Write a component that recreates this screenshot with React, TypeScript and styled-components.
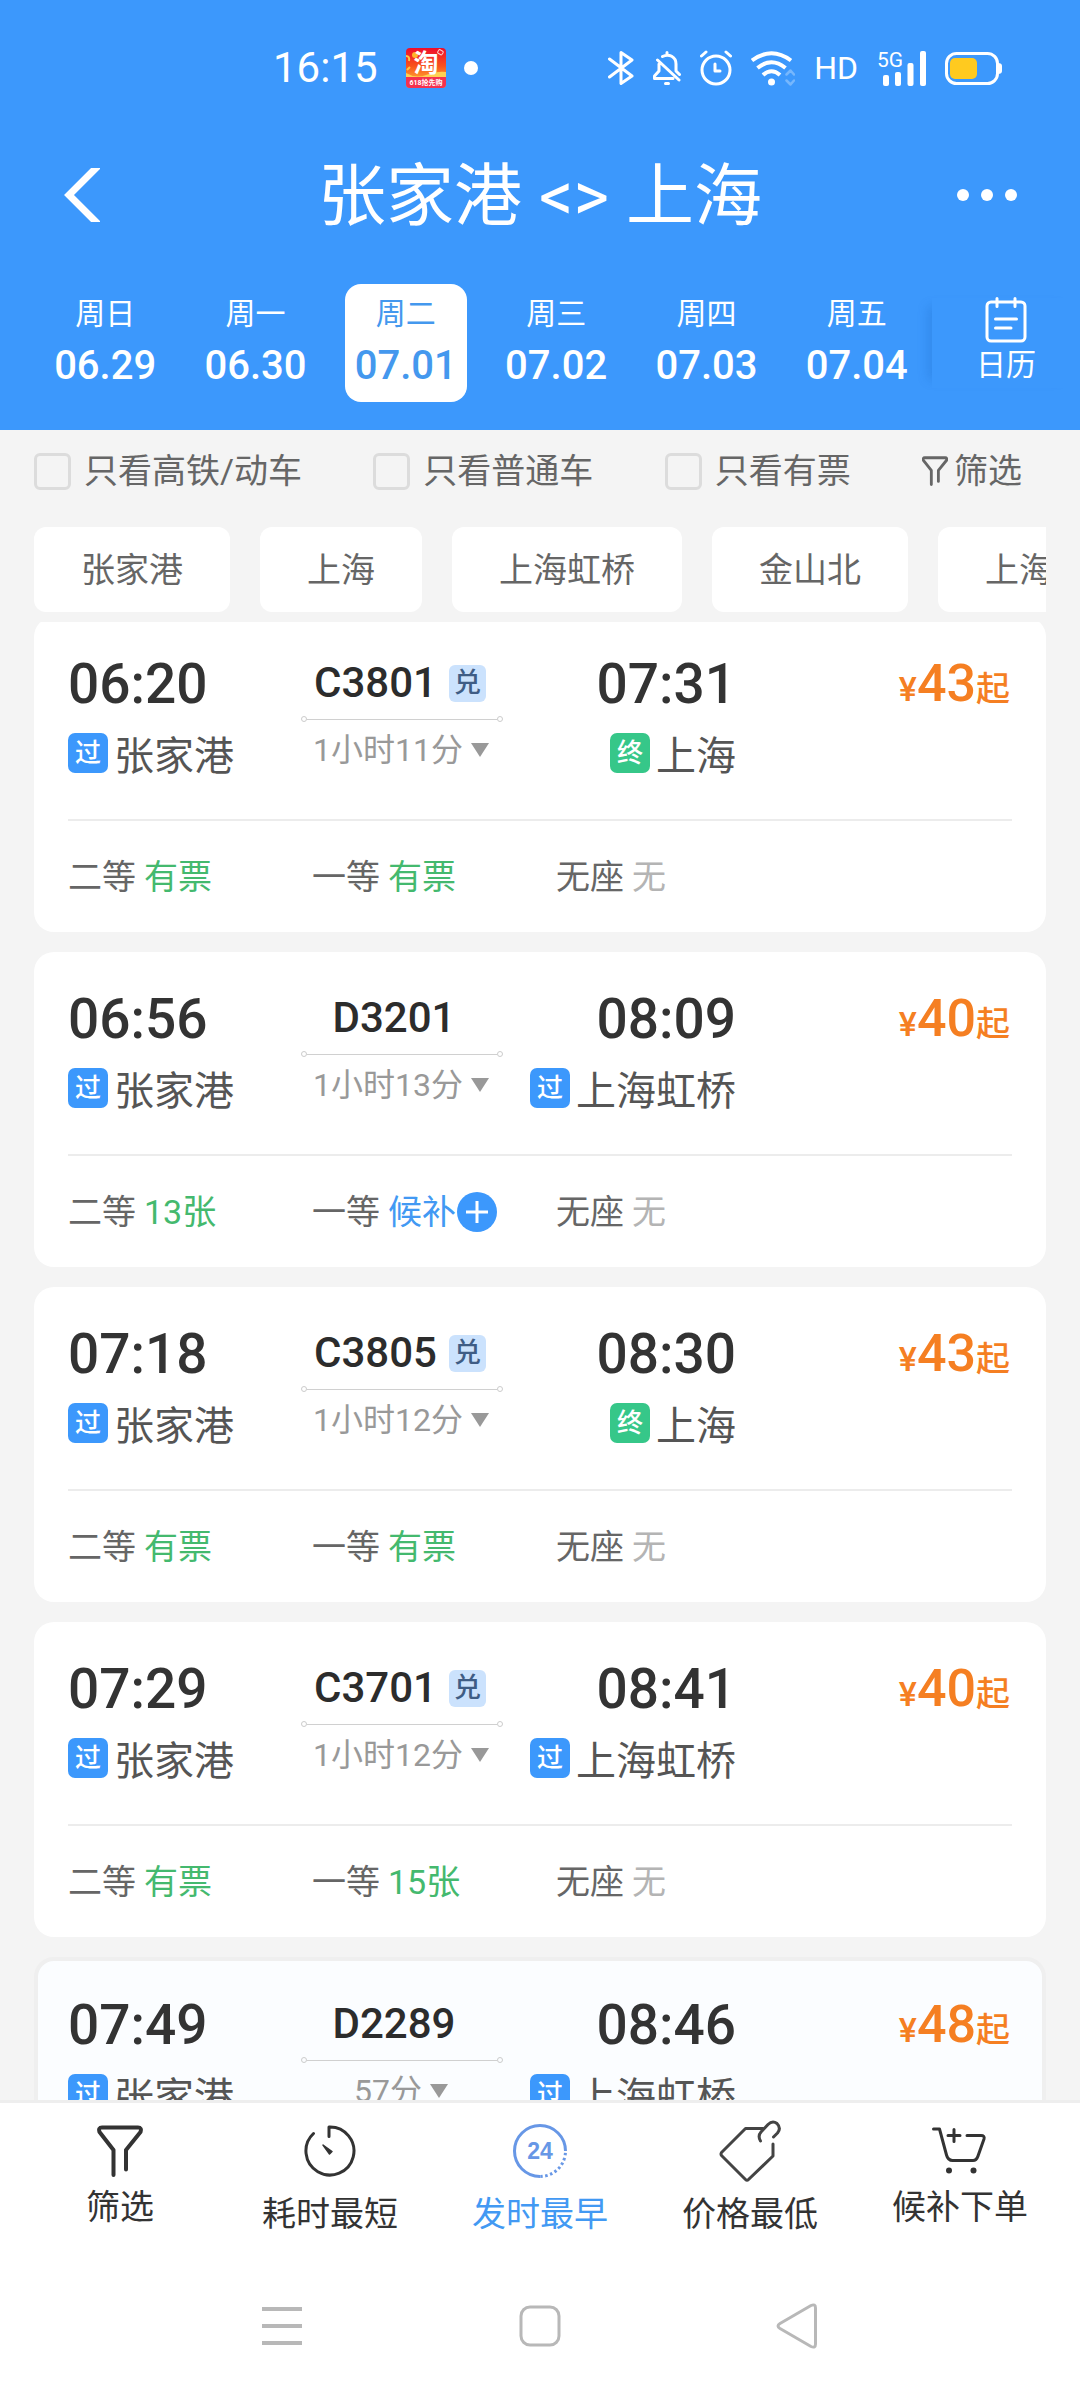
import React from 'react';
import styled, { createGlobalStyle, css } from 'styled-components';

const blue = '#3c98fc';

const GlobalStyle = createGlobalStyle`
  *, *::before, *::after { box-sizing: border-box; }
  body { margin: 0; background: #f4f4f4; }
  body, button, input {
    font-family: Roboto, "Noto Sans CJK SC", sans-serif;
  }
  button {
    padding: 0;
    border: 0;
    background: none;
    color: inherit;
    cursor: pointer;
  }
  h1, h2, p, ul { margin: 0; padding: 0; font-weight: 400; }
  ul { list-style: none; }
  svg { display: block; flex: none; }
`;

const Page = styled.div`
  display: flex;
  flex-direction: column;
  height: 100vh;
  overflow: hidden;
  background: #f4f4f4;
`;

/* ---------- header ---------- */

const Header = styled.header`
  flex: none;
  padding-bottom: 28px;
  background: ${blue};
  color: #fff;
`;

const StatusBar = styled.div`
  display: flex;
  align-items: center;
  justify-content: space-between;
  height: 136px;
  padding: 0 78px 0 273px;
`;

const StatusLeft = styled.div`
  display: flex;
  align-items: center;
`;

const Clock = styled.time`
  margin-right: 28px;
  font-size: 42px;
  line-height: 48px;
`;

const NoticeDot = styled.span`
  width: 14px;
  height: 14px;
  margin-left: 18px;
  border-radius: 50%;
  background: #fff;
`;

const StatusRight = styled.div`
  display: flex;
  align-items: center;
  gap: 19px;
`;

const HdLabel = styled.span`
  font-size: 32px;
  line-height: 36px;
`;

const TitleRow = styled.div`
  display: grid;
  grid-template-columns: 120px 1fr 120px;
  align-items: center;
  height: 118px;
  padding: 0 22px;
`;

const IconButton = styled.button`
  display: flex;
  align-items: center;
  justify-content: center;
  height: 80px;
`;

const Title = styled.h1`
  padding-top: 4px;
  font-size: 68px;
  line-height: 80px;
  text-align: center;
  white-space: nowrap;
`;

const DateRow = styled.div`
  display: flex;
  align-items: center;
  margin-top: 30px;
`;

const DateStrip = styled.div`
  display: flex;
  flex: 1;
  padding-left: 30px;
`;

const DateCell = styled.div`
  display: flex;
  flex: 1;
  justify-content: center;
`;

const DateButton = styled.button<{ $active?: boolean }>`
  display: flex;
  flex-direction: column;
  align-items: center;
  width: 122px;
  height: 118px;
  padding-top: 10px;
  border-radius: 16px;
  ${(p) => p.$active && css`
    background: #fff;
    color: #4498ee;
  `}
`;

const Weekday = styled.span`
  font-size: 30px;
  line-height: 40px;
`;

const DateText = styled.span`
  padding-top: 8px;
  font-size: 40px;
  font-weight: 500;
  line-height: 48px;
`;

const CalendarButton = styled.button`
  display: flex;
  flex-direction: column;
  align-items: center;
  justify-content: center;
  gap: 2px;
  width: 148px;
  height: 90px;
  padding-bottom: 5px;
  background: ${blue};
  box-shadow: -12px 0 10px -8px rgba(20, 90, 180, 0.22);
`;

/* ---------- filters ---------- */

const Filters = styled.form`
  display: flex;
  flex: none;
  align-items: center;
  justify-content: space-between;
  height: 97px;
  padding: 0 58px 15px 34px;
  color: #666;
  font-size: 34px;
  line-height: 40px;
`;

const CheckLabel = styled.label`
  display: flex;
  align-items: center;
  gap: 13px;
  cursor: pointer;
`;

const CheckBox = styled.input`
  appearance: none;
  width: 37px;
  height: 37px;
  margin: 0;
  border: 3px solid #dcdcdc;
  border-radius: 6px;
  background: transparent;
  &:checked { background: ${blue}; }
`;

const FilterButton = styled.button`
  display: flex;
  align-items: center;
  gap: 6px;
  font-size: 34px;
  line-height: 40px;
`;

const StationChips = styled.div`
  display: flex;
  flex: none;
  gap: 30px;
  margin: 0 34px;
  overflow: hidden;
`;

const Chip = styled.button`
  flex: none;
  height: 85px;
  padding: 0 47px;
  border-radius: 12px;
  background: #fff;
  color: #666;
  font-size: 34px;
  line-height: 40px;
`;

/* ---------- trains ---------- */

const TrainViewport = styled.main`
  flex: 1;
  min-height: 0;
  margin-top: 10px;
  padding: 0 34px;
  overflow: hidden;
`;

const TrainList = styled.ul`
  display: flex;
  flex-direction: column;
  gap: 20px;
  margin-top: -5px;
`;

const Card = styled.li<{ $pressed?: boolean }>`
  border-radius: 20px;
  padding: 39px 34px 0;
  background: #fff;
  ${(p) => p.$pressed && css`
    border: 4px solid #efefef;
    padding: 36px 30px 0;
    background: #fbfdff;
  `}
`;

const Journey = styled.div`
  display: grid;
  grid-template-columns: 233fr 202fr 233fr 276fr;
  align-items: start;
  padding-bottom: 38px;
  border-bottom: 2px solid #ececec;
`;

const Stop = styled.div<{ $end?: boolean }>`
  display: flex;
  flex-direction: column;
  align-items: ${(p) => (p.$end ? 'flex-end' : 'flex-start')};
  gap: 21px;
  white-space: nowrap;
`;

const StopTime = styled.time`
  color: #333;
  font-size: 55px;
  font-weight: 500;
  line-height: 56px;
`;

const Station = styled.div`
  display: flex;
  align-items: flex-start;
  gap: 6px;
  color: #555;
  font-size: 40px;
  line-height: 48px;
`;

const StopBadge = styled.span<{ $terminal?: boolean }>`
  width: 40px;
  height: 40px;
  border-radius: 7px;
  background: ${(p) => (p.$terminal ? '#36c789' : blue)};
  color: #fff;
  font-size: 26px;
  font-weight: 500;
  line-height: 40px;
  text-align: center;
`;

const TrainInfo = styled.div`
  display: flex;
  flex-direction: column;
  align-items: center;
  gap: 10px;
  padding-top: 4px;
`;

const TrainNumber = styled.h2`
  display: flex;
  align-items: center;
  padding-right: 4px;
  color: #2c2c2c;
  font-size: 42px;
  font-weight: 500;
  line-height: 46px;
`;

const NumberText = styled.span`
  margin-right: 12px;
`;

const RedeemBadge = styled.span`
  width: 37px;
  height: 37px;
  border-radius: 6px;
  background: #cbe2fd;
  color: #3f5d85;
  font-size: 27px;
  line-height: 37px;
  text-align: center;
`;

const RouteLine = styled.div`
  display: flex;
  align-items: center;
  width: 100%;
  height: 6px;
  &::before, &::after {
    content: '';
    width: 6px;
    height: 6px;
    border: 1px solid #ccc;
    border-radius: 50%;
  }
`;

const RouteRule = styled.span`
  flex: 1;
  height: 1px;
  background: #d0d0d0;
`;

const Duration = styled.button`
  display: flex;
  align-items: center;
  gap: 8px;
  padding-right: 2px;
  color: #999;
  font-size: 32px;
  line-height: 36px;
  white-space: nowrap;
`;

const Price = styled.p`
  padding-right: 2px;
  color: #f57f22;
  font-size: 34px;
  font-weight: 500;
  line-height: 56px;
  text-align: right;
  white-space: nowrap;
`;

const Amount = styled.strong`
  font-size: 52px;
  font-weight: 500;
`;

const Seats = styled.div`
  display: grid;
  grid-template-columns: repeat(3, 244fr) 212fr;
  padding: 36px 0 35px;
`;

const Seat = styled.div`
  display: flex;
  align-items: center;
  gap: 8px;
  color: #666;
  font-size: 34px;
  line-height: 40px;
  white-space: nowrap;
`;

type SeatState = 'ok' | 'wait' | 'none';
const seatColors: Record<SeatState, string> = { ok: '#44b96e', wait: '#4299f3', none: '#b4b4b4' };

const SeatStatus = styled.span<{ $state: SeatState }>`
  display: flex;
  align-items: center;
  height: 40px;
  color: ${(p) => seatColors[p.$state]};
`;

/* ---------- bottom ---------- */

const SortBar = styled.nav`
  display: flex;
  flex: none;
  height: 153px;
  padding: 14px 15px 0;
  border-top: 3px solid #eee;
  background: #fff;
`;

const SortButton = styled.button<{ $active?: boolean; $low?: boolean }>`
  display: flex;
  flex: 1;
  flex-direction: column;
  align-items: center;
  gap: ${(p) => (p.$low ? 9 : 2)}px;
  color: ${(p) => (p.$active ? '#4299f3' : '#333')};
  font-size: 34px;
  line-height: 40px;
`;

const IconSlot = styled.span`
  display: flex;
  align-items: center;
  height: 68px;
`;

const SystemNav = styled.nav`
  display: flex;
  flex: none;
  align-items: center;
  height: 147px;
  padding: 0 153px 2px;
  background: #fff;
`;

const SystemButton = styled.button`
  display: flex;
  flex: 1;
  align-items: center;
  justify-content: center;
  height: 72px;
`;

/* ---------- icons ---------- */

const stroke = (width: number, color = 'currentColor') => ({
  fill: 'none',
  stroke: color,
  strokeWidth: width,
  strokeLinecap: 'round' as const,
  strokeLinejoin: 'round' as const,
});

const ShopAppIcon = () => (
  <svg width="40" height="40" viewBox="0 0 40 40" aria-hidden="true">
    <defs>
      <linearGradient id="shop" x1="0" y1="0" x2="0" y2="1">
        <stop offset="0" stopColor="#ee0d2c" />
        <stop offset="0.45" stopColor="#f8521c" />
        <stop offset="0.75" stopColor="#ff9a2e" />
      </linearGradient>
    </defs>
    <rect width="40" height="40" rx="4" fill="url(#shop)" />
    <circle cx="9" cy="7" r="3" fill="#ffb52b" />
    <path d="M0 8q4 0 3 5M1 22l3-3" stroke="#ffc545" strokeWidth="2" fill="none" />
    <rect x="32" y="2" width="5" height="4" rx="1" fill="none" stroke="#ffd0c8" transform="rotate(30 34 4)" />
    <path d="M0 25q10 6 20 2t20-3v5H0z" fill="#ffd052" />
    <path d="M0 29h40v7q0 4-4 4H4q-4 0-4-4z" fill="#f5314f" />
    <text x="20" y="24" fontSize="25" fontWeight="700" fill="#fff" textAnchor="middle">淘</text>
    <text x="20" y="37" fontSize="7" fontWeight="700" fill="#fff" textAnchor="middle">618抢先购</text>
  </svg>
);

const BluetoothIcon = () => (
  <svg width="26" height="34" viewBox="0 0 26 34" {...stroke(3)} aria-label="蓝牙">
    <path d="M1.5 8L24 25L13 32.5V1.5L24 9L1.5 26" />
  </svg>
);

const MutedIcon = () => (
  <svg width="28" height="34" viewBox="0 0 28 34" {...stroke(3)} aria-label="静音">
    <path d="M4.500 9L26 29M14 1.500V4M9.500 5.500C16 2 23 6 23 13V20L26.500 23.500M6 13V20L1.500 25V27.500H20M12.500 32.500H15.500" />
  </svg>
);

const AlarmIcon = () => (
  <svg width="32" height="36" viewBox="0 0 32 36" {...stroke(3)} aria-label="闹钟">
    <circle cx="16" cy="20" r="14" />
    <path d="M15 14V21H20M1.500 6L6 2M30.500 6L26 2" />
  </svg>
);

const WifiIcon = () => (
  <svg width="44" height="35" viewBox="0 0 44 35" aria-label="无线网络">
    <g fill="none" stroke="#fff" strokeWidth="4">
      <path d="M1 9.500Q20.500-5 40 9.500M6.500 17Q20.500 5.500 34.500 17M12 24Q20.500 16.500 29 24" />
    </g>
    <circle cx="20.500" cy="31" r="3.500" fill="#fff" />
    <g opacity="0.3" {...stroke(2.500, '#fff')}>
      <path d="M35.500 23.500L39.500 19.500L43 23.500M35.500 29.500L39.500 33.500L43 29.500" />
    </g>
  </svg>
);

const SignalIcon = () => (
  <svg width="49" height="35" viewBox="0 0 49 35" fill="#fff" overflow="visible" aria-label="信号">
    <text x="0" y="16" fontSize="21">5G</text>
    <rect x="6" y="24" width="6" height="11" rx="2" />
    <rect x="18" y="21" width="6" height="14" rx="2" />
    <rect x="30.500" y="12" width="6" height="23" rx="2" />
    <rect x="43" y="0" width="6" height="35" rx="2" />
  </svg>
);

const BatteryIcon = () => (
  <svg width="57" height="33" viewBox="0 0 57 33" aria-label="电量">
    <rect x="1.500" y="1.500" width="51" height="30" rx="10" fill="none" stroke="#fff" strokeWidth="3" />
    <rect x="5" y="6" width="27" height="21" rx="5" fill="#ffca1f" />
    <path d="M53 11q4 0 4 3v5q0 3-4 3z" fill="#fff" />
  </svg>
);

const BackIcon = () => (
  <svg width="36" height="54" viewBox="0 0 36 54" fill="none" stroke="#fff" strokeWidth="7" aria-hidden="true">
    <path d="M36-4L5 27L36 58" />
  </svg>
);

const MoreIcon = () => (
  <svg width="82" height="12" viewBox="0 0 82 12" fill="#fff" aria-hidden="true">
    <circle cx="6" cy="6" r="6" />
    <circle cx="30" cy="6" r="6" />
    <circle cx="54" cy="6" r="6" />
  </svg>
);

const CalendarIcon = () => (
  <svg width="42" height="46" viewBox="0 0 42 46" {...stroke(3)} aria-hidden="true">
    <rect x="2" y="5" width="38" height="39" rx="4" />
    <path d="M12 1.500V9.500M30 1.500V9.500M10.500 22H31.500M10.500 31H26" />
  </svg>
);

const FunnelIcon = ({ width, height, line }: { width: number; height: number; line: number }) => (
  <svg width={width} height={height} viewBox="0 0 46 52" {...stroke(line)} aria-hidden="true">
    <path d="M16.500 50V25L2.500 7Q1 2.500 5 2.500H41Q45 2.500 43.500 7L29 25V44.500" />
  </svg>
);

const PlusIcon = () => (
  <svg width="42" height="42" viewBox="0 0 42 42" aria-hidden="true">
    <circle cx="21" cy="21" r="20" fill={blue} />
    <path d="M21 10V32M10 21H32" stroke="#fff" strokeWidth="3" />
  </svg>
);

const TriangleIcon = () => (
  <svg width="18" height="16" viewBox="0 0 18 16" aria-hidden="true">
    <path d="M0 1H18L9 15Z" fill="#999" />
  </svg>
);

const TimerIcon = () => (
  <svg width="52" height="52" viewBox="0 0 52 52" {...stroke(3)} aria-hidden="true">
    <path d="M25 11.500V2A24 24 0 1 1 9.500 8.500" />
    <path d="M19 20L28 26.500L25.500 29Z" fill="currentColor" strokeWidth="1.500" />
  </svg>
);

const Clock24Icon = () => (
  <svg width="56" height="56" viewBox="0 0 56 56" fill="none" stroke="#6797e6" strokeWidth="3" aria-hidden="true">
    <path d="M28 53.500A25.500 25.500 0 1 1 53.500 28" />
    <path d="M53.500 28A25.500 25.500 0 0 1 28 53.500" strokeDasharray="2.500 2.500" strokeDashoffset="-2" />
    <text x="28" y="36" fontFamily="Liberation Sans, sans-serif" fontSize="23" fontWeight="700" fill="#6797e6" stroke="none" textAnchor="middle">24</text>
  </svg>
);

const TagIcon = () => (
  <svg width="62" height="62" viewBox="0 0 62 62" {...stroke(3, '#444')} aria-hidden="true">
    <path d="M44 8.500H26.500L2.500 32.500Q1.500 34 2.500 35.500L26.500 59.500Q28 61 29.500 59.500L54 36V24" />
    <path d="M41.500 21Q38.500 16 42 12L49 4.500Q53.500 0 58 3.500Q62.500 8 58.500 13L54.500 17" />
  </svg>
);

const CartIcon = () => (
  <svg width="58" height="52" viewBox="0 0 58 52" {...stroke(3, '#333')} aria-hidden="true">
    <path d="M2.500 4H8.500L15.500 30Q17 35.500 21.500 35.500H42Q45.500 35.500 47 31L53 14Q54 10.500 50 10.500H36M17 10.500H29M23 4.500V16.500" />
    <circle cx="18" cy="45.500" r="3" fill="#333" stroke="none" />
    <circle cx="42.500" cy="45.500" r="3" fill="#333" stroke="none" />
  </svg>
);

const MenuIcon = () => (
  <svg width="40" height="40" viewBox="0 0 40 40" stroke="#b8b8b8" strokeWidth="4" aria-hidden="true">
    <path d="M0 3H40M0 20H40M0 37H40" />
  </svg>
);

const HomeIcon = () => (
  <svg width="42" height="42" viewBox="0 0 42 42" {...stroke(3, '#b8b8b8')} aria-hidden="true">
    <rect x="2" y="2" width="38" height="38" rx="9" />
  </svg>
);

const ReturnIcon = () => (
  <svg width="44" height="46" viewBox="0 0 44 46" {...stroke(3, '#b8b8b8')} aria-hidden="true">
    <path d="M35 2.500Q39.500 0.500 39.500 5V41Q39.500 45.500 35 43.500L4 25.500Q0 23 4 20.500Z" />
  </svg>
);

/* ---------- data ---------- */

const dates = [
  ['周日', '06.29'],
  ['周一', '06.30'],
  ['周二', '07.01'],
  ['周三', '07.02'],
  ['周四', '07.03'],
  ['周五', '07.04'],
];

const stations = ['张家港', '上海', '上海虹桥', '金山北', '上海南'];

interface Train {
  number: string;
  redeem?: boolean;
  depart: string;
  arrive: string;
  to: string;
  terminal?: boolean;
  duration: string;
  price: number;
  pressed?: boolean;
  seats: [string, string, SeatState][];
}

const trains: Train[] = [
  {
    number: 'C3801', redeem: true, depart: '06:20', arrive: '07:31', to: '上海', terminal: true,
    duration: '1小时11分', price: 43,
    seats: [['二等', '有票', 'ok'], ['一等', '有票', 'ok'], ['无座', '无', 'none']],
  },
  {
    number: 'D3201', depart: '06:56', arrive: '08:09', to: '上海虹桥',
    duration: '1小时13分', price: 40,
    seats: [['二等', '13张', 'ok'], ['一等', '候补', 'wait'], ['无座', '无', 'none']],
  },
  {
    number: 'C3805', redeem: true, depart: '07:18', arrive: '08:30', to: '上海', terminal: true,
    duration: '1小时12分', price: 43,
    seats: [['二等', '有票', 'ok'], ['一等', '有票', 'ok'], ['无座', '无', 'none']],
  },
  {
    number: 'C3701', redeem: true, depart: '07:29', arrive: '08:41', to: '上海虹桥',
    duration: '1小时12分', price: 40,
    seats: [['二等', '有票', 'ok'], ['一等', '15张', 'ok'], ['无座', '无', 'none']],
  },
  {
    number: 'D2289', depart: '07:49', arrive: '08:46', to: '上海虹桥',
    duration: '57分', price: 48, pressed: true, seats: [],
  },
];

const TrainCard = ({ train }: { train: Train }) => (
  <Card $pressed={train.pressed}>
    <Journey>
      <Stop>
        <StopTime>{train.depart}</StopTime>
        <Station><StopBadge>过</StopBadge>张家港</Station>
      </Stop>
      <TrainInfo>
        <TrainNumber>
          <NumberText>{train.number}</NumberText>
          {train.redeem && <RedeemBadge>兑</RedeemBadge>}
        </TrainNumber>
        <RouteLine><RouteRule /></RouteLine>
        <Duration type="button">{train.duration}<TriangleIcon /></Duration>
      </TrainInfo>
      <Stop $end>
        <StopTime>{train.arrive}</StopTime>
        <Station>
          <StopBadge $terminal={train.terminal}>{train.terminal ? '终' : '过'}</StopBadge>
          {train.to}
        </Station>
      </Stop>
      <Price>¥<Amount>{train.price}</Amount>起</Price>
    </Journey>
    <Seats>
      {train.seats.map(([name, status, state]) => (
        <Seat key={name}>
          {name}
          <SeatStatus $state={state}>
            {status}
            {state === 'wait' && <PlusIcon />}
          </SeatStatus>
        </Seat>
      ))}
    </Seats>
  </Card>
);

export default function App() {
  return (
    <>
      <GlobalStyle />
      <Page>
        <Header>
          <StatusBar>
            <StatusLeft>
              <Clock>16:15</Clock>
              <ShopAppIcon />
              <NoticeDot />
            </StatusLeft>
            <StatusRight>
              <BluetoothIcon />
              <MutedIcon />
              <AlarmIcon />
              <WifiIcon />
              <HdLabel>HD</HdLabel>
              <SignalIcon />
              <BatteryIcon />
            </StatusRight>
          </StatusBar>
          <TitleRow>
            <IconButton type="button" aria-label="返回"><BackIcon /></IconButton>
            <Title>张家港 &lt;&gt; 上海</Title>
            <IconButton type="button" aria-label="更多"><MoreIcon /></IconButton>
          </TitleRow>
          <DateRow>
            <DateStrip>
              {dates.map(([day, date]) => (
                <DateCell key={date}>
                  <DateButton type="button" $active={date === '07.01'}>
                    <Weekday>{day}</Weekday>
                    <DateText>{date}</DateText>
                  </DateButton>
                </DateCell>
              ))}
            </DateStrip>
            <CalendarButton type="button">
              <CalendarIcon />
              <Weekday>日历</Weekday>
            </CalendarButton>
          </DateRow>
        </Header>

        <Filters>
          <CheckLabel><CheckBox type="checkbox" />只看高铁/动车</CheckLabel>
          <CheckLabel><CheckBox type="checkbox" />只看普通车</CheckLabel>
          <CheckLabel><CheckBox type="checkbox" />只看有票</CheckLabel>
          <FilterButton type="button"><FunnelIcon width={26} height={30} line={5} />筛选</FilterButton>
        </Filters>

        <StationChips>
          {stations.map((name) => <Chip key={name} type="button">{name}</Chip>)}
        </StationChips>

        <TrainViewport>
          <TrainList>
            {trains.map((train) => <TrainCard key={train.number} train={train} />)}
          </TrainList>
        </TrainViewport>

        <SortBar>
          <SortButton type="button"><IconSlot><FunnelIcon width={46} height={52} line={4} /></IconSlot>筛选</SortButton>
          <SortButton type="button" $low><IconSlot><TimerIcon /></IconSlot>耗时最短</SortButton>
          <SortButton type="button" $low $active><IconSlot><Clock24Icon /></IconSlot>发时最早</SortButton>
          <SortButton type="button" $low><IconSlot><TagIcon /></IconSlot>价格最低</SortButton>
          <SortButton type="button"><IconSlot><CartIcon /></IconSlot>候补下单</SortButton>
        </SortBar>

        <SystemNav>
          <SystemButton type="button" aria-label="菜单"><MenuIcon /></SystemButton>
          <SystemButton type="button" aria-label="主页"><HomeIcon /></SystemButton>
          <SystemButton type="button" aria-label="后退"><ReturnIcon /></SystemButton>
        </SystemNav>
      </Page>
    </>
  );
}
